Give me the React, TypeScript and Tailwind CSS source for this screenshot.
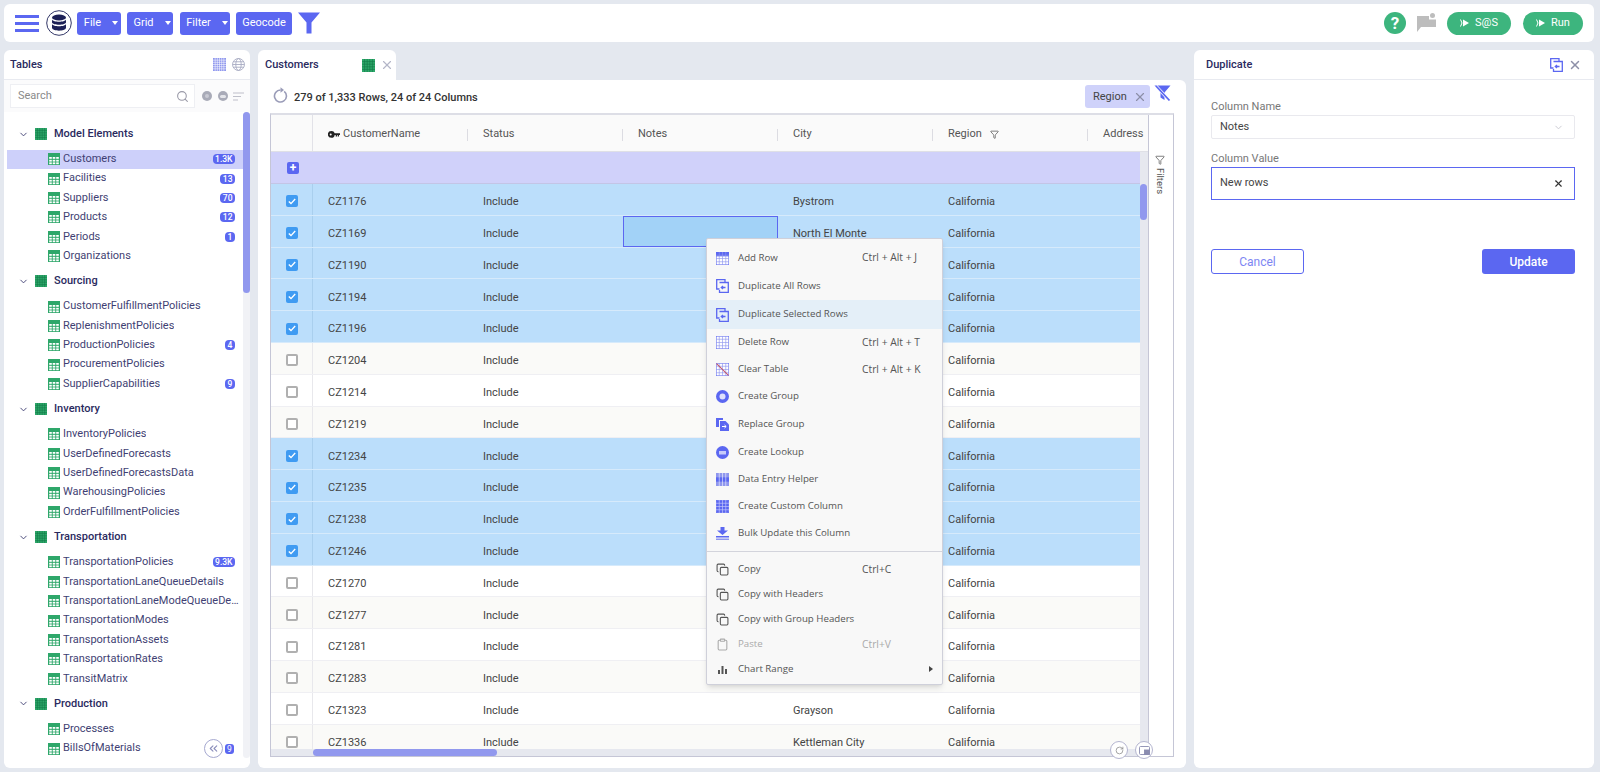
import { ChevronDown, ChevronsLeft, Copy, Clipboard, RotateCw, Search, X, Filter } from "lucide-react";

const tree = [
  { name: "Model Elements", items: [["Customers", "1.3K"], ["Facilities", "13"], ["Suppliers", "70"], ["Products", "12"], ["Periods", "1"], ["Organizations", ""]] },
  { name: "Sourcing", items: [["CustomerFulfillmentPolicies", ""], ["ReplenishmentPolicies", ""], ["ProductionPolicies", "4"], ["ProcurementPolicies", ""], ["SupplierCapabilities", "9"]] },
  { name: "Inventory", items: [["InventoryPolicies", ""], ["UserDefinedForecasts", ""], ["UserDefinedForecastsData", ""], ["WarehousingPolicies", ""], ["OrderFulfillmentPolicies", ""]] },
  { name: "Transportation", items: [["TransportationPolicies", "9.3K"], ["TransportationLaneQueueDetails", ""], ["TransportationLaneModeQueueDetails", ""], ["TransportationModes", ""], ["TransportationAssets", ""], ["TransportationRates", ""], ["TransitMatrix", ""]] },
  { name: "Production", items: [["Processes", ""], ["BillsOfMaterials", ""]] },
];

const rows = [
  ["CZ1176", "Bystrom", true], ["CZ1169", "North El Monte", true], ["CZ1190", "", true], ["CZ1194", "", true], ["CZ1196", "", true],
  ["CZ1204", "", false], ["CZ1214", "", false], ["CZ1219", "", false], ["CZ1234", "", true], ["CZ1235", "", true], ["CZ1238", "", true], ["CZ1246", "", true],
  ["CZ1270", "", false], ["CZ1277", "", false], ["CZ1281", "", false], ["CZ1283", "", false], ["CZ1323", "Grayson", false], ["CZ1336", "Kettleman City", false],
] as [string, string, boolean][];

const GREEN = "#2ea76a";
const BLUE = "#5b67f1";

function ItemGrid() {
  return (
    <svg width="12" height="12" viewBox="0 0 12 12" className="shrink-0">
      <rect width="12" height="12" fill={GREEN} />
      {[1.2, 4.7, 8.2].map((x) => [4, 6.8, 9.4].map((y) => <rect key={`${x}-${y}`} x={x} y={y} width="2.6" height="1.8" fill="#fff" />))}
    </svg>
  );
}

function GroupGrid({ size = 12 }: { size?: number }) {
  return (
    <svg width={size} height={size} viewBox="0 0 12 12" className="shrink-0">
      <rect width="12" height="12" fill={GREEN} />
      {[2.4, 4.8, 7.2, 9.6].map((v) => <path key={v} d={`M${v} 0V12M0 ${v}H12`} stroke="#137a47" strokeWidth="0.6" />)}
    </svg>
  );
}

function TableIcon({ head = false, all = false, slash = false }: { head?: boolean; all?: boolean; slash?: boolean }) {
  return (
    <svg width="13" height="13" viewBox="0 0 12 12" className="shrink-0">
      <rect x="0.25" y="0.25" width="11.5" height="11.5" fill={all ? BLUE : "#fff"} stroke={BLUE} strokeWidth="0.5" />
      {head && <rect width="12" height="4" fill={BLUE} />}
      {[3, 6, 9].map((v) => <path key={v} d={`M${v} 0V12M0 ${v}H12`} stroke={all ? "#c7cbfa" : "#8f97ee"} strokeWidth="0.6" />)}
      {slash && <path d="M0.5 0.5L11.5 11.5" stroke="#c2556a" strokeWidth="1" />}
    </svg>
  );
}

function DuplicateIcon({ size = 13 }: { size?: number }) {
  return (
    <svg width={size} height={size + 1} viewBox="0 0 13 14" fill="none" stroke={BLUE} strokeWidth="1.3" className="shrink-0">
      <path d="M3.5 10H0.7V0.7H9V3" />
      <path d="M3.5 3.5H12.3V13.3H3.5V11" />
      <path d="M9.5 8.5H5.5M7 7L5.3 8.5L7 10" />
    </svg>
  );
}

function KeyIcon() {
  return (
    <svg width="12" height="7" viewBox="0 0 12 7" fill="#222" className="shrink-0 mr-[3px]">
      <path fillRule="evenodd" d="M3.300 0A3.300 3.300 0 1 1 3.300 6.800A3.300 3.300 0 0 1 3.300 0ZM2.700 2.500A1 1 0 1 0 2.700 4.500A1 1 0 0 0 2.700 2.500Z" />
      <path d="M5.500 2.300H12V4H11V5.600H9.700V4H9V5.600H7.700V4H5.500Z" />
    </svg>
  );
}

function RefreshIcon() {
  return (
    <svg width="15" height="16" viewBox="0 0 15 16" fill="none" className="shrink-0 mr-[6px] mt-[-3px]">
      <path d="M11.200 4.300A6 6 0 1 1 7.500 3" stroke="#9a9cb8" strokeWidth="1.600" />
      <path d="M7.500 0.300V5.700L11 3Z" fill="#9a9cb8" />
    </svg>
  );
}

function Badge({ text }: { text: string }) {
  return <span className="ml-auto mr-[8px] h-[10px] min-w-[10px] px-[2.500px] rounded-[4px] bg-[#5b67f1] text-white text-[8.500px] leading-[10px] font-medium text-center">{text}</span>;
}

function Tree() {
  return (
    <div className="flex-1 min-w-0 ml-[3px] pt-[6.500px] text-[#3f3f73] text-[11px]">
      {tree.map((g) => (
        <div key={g.name}>
          <div className="h-[31px] flex items-center pl-[11px] font-medium text-[#2a2a5e]">
            <ChevronDown size={11} className="text-[#3f3f73] mr-[6px]" strokeWidth={2} />
            <GroupGrid />
            <span className="ml-[7px]">{g.name}</span>
          </div>
          {g.items.map(([name, badge]) => (
            <div key={name} className={`h-[19.4px] flex items-center pl-[41px] ${name === "Customers" ? "bg-[#cdd0fa]" : ""}`}>
              <ItemGrid />
              <span className="ml-[3px] truncate max-w-[178px]">{name}</span>
              {badge && <Badge text={badge} />}
            </div>
          ))}
        </div>
      ))}
    </div>
  );
}

function LeftPanel() {
  return (
    <aside className="relative w-[246px] mr-[8px] bg-white rounded-md flex flex-col overflow-hidden">
      <div className="h-[30px] shrink-0 flex items-center pl-[6px] pr-[5px] border-b border-[#e8eaf0] text-[11px] font-medium text-[#2a2a5e]">
        <span className="mt-[1px]">Tables</span>
        <svg width="13" height="13" viewBox="0 0 12 12" className="ml-auto"><rect width="12" height="12" fill="#8f97ee" />{[2, 4, 6, 8, 10].map((v) => <path key={v} d={`M${v} 0V12M0 ${v}H12`} stroke="#fff" strokeWidth="0.5" />)}</svg>
        <svg width="13" height="13" viewBox="0 0 12 12" fill="none" stroke="#a5a8c0" strokeWidth="0.8" className="ml-[6px]"><circle cx="6" cy="6" r="5.5" /><ellipse cx="6" cy="6" rx="2.500" ry="5.500" /><path d="M0.5 6H11.5M1.2 3.5H10.8M1.2 8.5H10.8" /></svg>
      </div>
      <div className="h-[32px] shrink-0 flex items-center pl-[6px] pr-[6px] bg-[#fbfbfc]">
        <div className="w-[185px] h-[24px] bg-white border border-[#eeeff3] flex items-center pl-[7px] pr-[5px] text-[11px] text-[#8a8a8a]">
          <span>Search</span>
          <Search size={13} className="ml-auto text-[#9a9aa8]" />
        </div>
        <span className="ml-[7px] w-[10px] h-[10px] rounded-full bg-[#a9abb8] flex items-center justify-center"><span className="w-[4px] h-[4px] rounded-full bg-[#c9cad4]" /></span>
        <span className="ml-[6px] w-[10px] h-[10px] rounded-full bg-[#a9abb8] flex items-center justify-center"><span className="w-[6px] h-[3px] rounded-full bg-[#e4e5ea]" /></span>
        <svg width="11" height="9" viewBox="0 0 11 9" stroke="#bfc0ca" strokeWidth="1.2" className="ml-[5px]"><path d="M0 1H11M0 4.5H8M0 8H5" /></svg>
      </div>
      <div className="flex-1 flex min-h-0">
        <Tree />
        <div className="w-[7px] h-[646px] ml-[0px] bg-[#f1f2f6] rounded-full shrink-0">
          <div className="h-[181px] bg-[#9198ee] rounded-full" />
        </div>
      </div>
      <span className="absolute left-[200px] top-[689px] w-[19px] h-[19px] rounded-full bg-white border border-[#a5a8d0] flex items-center justify-center text-[#8a8dbb]">
        <ChevronsLeft size={13} strokeWidth={2} />
      </span>
      <span className="absolute left-[221px] top-[694px] w-[9px] h-[10px] rounded-[3px] bg-[#5b67f1] text-white text-[8.500px] leading-[10px] text-center">9</span>
    </aside>
  );
}

const columns = ["CustomerName", "Status", "Notes", "City", "Region"];

function DataTable() {
  return (
    <div className="relative mx-[12px] flex border border-[#c5c6d6] border-t-2 border-t-[#dddee6] h-[644px] text-[11px] text-[#444]">
      <div className="w-[877px] shrink-0 flex flex-col overflow-hidden">
        <div className="h-[37px] shrink-0 flex bg-[#fafafa] border-b border-[#dfe0e6] text-[#555]">
          <div className="w-[42px] shrink-0 border-r border-[#e2e2e8]" />
          {columns.map((c, i) => (
            <div key={c} className="w-[155px] shrink-0 flex items-center pl-[15px] pt-[3px] relative">
              {i === 0 && <KeyIcon />}
              <span>{c}</span>
              {c === "Region" && <Filter size={9} className="ml-[8px] text-[#555]" />}
              <span className="ml-auto w-px h-[12px] bg-[#dcdce2]" />
            </div>
          ))}
          <div className="pl-[15px] pt-[3px] flex items-center">Address</div>
        </div>
        <div className="flex-1 min-h-0 flex">
          <div className="w-[869px] shrink-0 overflow-hidden">
            <div className="h-[32px] bg-[#d0d1fa] border-b border-[#c3c5e6] flex items-center pl-[16px]">
              <span className="w-[12px] h-[12px] rounded-[2px] bg-[#5b67f1] text-white flex items-center justify-center text-[12px] leading-none font-bold">+</span>
            </div>
            {rows.map(([id, city, sel], idx) => (
              <div key={id} className={`h-[31.8px] flex border-b ${sel ? "bg-[#bbdefb] border-[#d6eafb]" : idx % 2 ? "bg-[#fafaf8] border-[#efeff3]" : "bg-white border-[#efeff3]"}`}>
                <div className={`w-[42px] shrink-0 flex items-center justify-center pt-[4px] border-r ${sel ? "border-[#a9cfee]" : "border-[#e8e8ec]"}`}>
                  {sel ? (
                    <span className="w-[12px] h-[12px] rounded-[2px] bg-[#3f9bf2] flex items-center justify-center">
                      <svg width="8" height="7" viewBox="0 0 8 7" fill="none" stroke="#fff" strokeWidth="1.4"><path d="M0.8 3.5L3 5.6L7.2 1" /></svg>
                    </span>
                  ) : (
                    <span className="w-[12px] h-[12px] rounded-[2px] bg-white border-2 border-[#b0b0b0]" />
                  )}
                </div>
                <div className="w-[155px] shrink-0 pl-[15px] pt-[6px] flex items-center">{id}</div>
                <div className="w-[155px] shrink-0 pl-[15px] pt-[6px] flex items-center">Include</div>
                <div className={`w-[155px] shrink-0 ${id === "CZ1169" ? "bg-[#a2d2f7] border border-[#5b67f1]" : ""}`} />
                <div className="w-[155px] shrink-0 pl-[15px] pt-[6px] flex items-center">{city}</div>
                <div className="w-[155px] shrink-0 pl-[15px] pt-[6px] flex items-center">California</div>
              </div>
            ))}
          </div>
          <div className="w-[8px] bg-[#e6e8ef] shrink-0">
            <div className="h-[36px] mt-[32px] w-[7px] bg-[#9198ee] rounded-full" />
          </div>
        </div>
        <div className="h-[7px] shrink-0 bg-[#e6e8ef] pl-[42px]">
          <div className="w-[184px] h-[7px] bg-[#9198ee] rounded-full" />
        </div>
      </div>
      <div className="flex-1 border-l border-[#c5c6d6] flex flex-col items-center pt-[40px] pr-[3px] text-[9.500px] text-[#555]">
        <Filter size={10} className="text-[#666] mb-[3px]" />
        <span className="[writing-mode:vertical-rl]">Filters</span>
      </div>
      <span className="absolute left-[839px] top-[626px] w-[18px] h-[18px] rounded-full bg-white border border-[#b4b5d0] flex items-center justify-center">
        <RotateCw size={9} className="text-[#888]" />
      </span>
      <span className="absolute left-[864px] top-[626px] w-[18px] h-[18px] rounded-full bg-white border border-[#b4b5d0] flex items-center justify-center">
        <svg width="11" height="9" viewBox="0 0 11 9" fill="none" stroke="#8a8cb0" strokeWidth="0.9"><rect x="0.5" y="0.5" width="10" height="8" rx="1" /><rect x="5.5" y="4" width="5" height="4.5" fill="#8a8cb0" /></svg>
      </span>
    </div>
  );
}

function MenuRow({ y, icon, label, hint, light, active }: { y: number; icon: React.ReactNode; label: string; hint?: string; light?: boolean; active?: boolean }) {
  return (
    <div className={`flex items-center pl-[9px] ${active ? "bg-[#e4eff8]" : ""} ${light ? "text-[#aaa]" : "text-[#555]"}`} style={{ height: y }}>
      <span className="w-[13px] flex justify-center shrink-0">{icon}</span>
      <span className="ml-[9px] text-[9.700px]">{label}</span>
      {hint && <span className="absolute left-[155px] text-[10.300px]">{hint}</span>}
    </div>
  );
}

function ContextMenu() {
  const copy = <Copy size={13} className="text-[#555]" />;
  return (
    <div className="absolute left-[706px] top-[238px] w-[237px] h-[447px] pt-[5px] bg-[#f8f8f8] border border-[#cfd0da] rounded-[2px] shadow-md font-['Open_Sans',sans-serif]">
      <MenuRow y={28} icon={<TableIcon head />} label="Add Row" hint="Ctrl + Alt + J" />
      <MenuRow y={28} icon={<DuplicateIcon />} label="Duplicate All Rows" />
      <MenuRow y={29} icon={<DuplicateIcon />} label="Duplicate Selected Rows" active />
      <MenuRow y={27} icon={<TableIcon />} label="Delete Row" hint="Ctrl + Alt + T" />
      <MenuRow y={27} icon={<TableIcon slash />} label="Clear Table" hint="Ctrl + Alt + K" />
      <MenuRow y={27} icon={<svg width="13" height="13" viewBox="0 0 13 13"><circle cx="6.5" cy="6.5" r="6.5" fill={BLUE} /><circle cx="6.5" cy="6.5" r="3" fill="#dfe1fc" /></svg>} label="Create Group" />
      <MenuRow y={28} icon={<svg width="13" height="13" viewBox="0 0 13 13" fill={BLUE}><path d="M0 0H7V2H3V9H0Z" /><path d="M4 3H9.5L13 6.5V13H4Z" /><path d="M6 8.5H10M8.5 7L10.2 8.5L8.5 10" stroke="#fff" fill="none" /></svg>} label="Replace Group" />
      <MenuRow y={28} icon={<svg width="13" height="13" viewBox="0 0 13 13"><circle cx="6.5" cy="6.5" r="6.5" fill={BLUE} /><rect x="3" y="5" width="7" height="3.5" fill="#c7cbfa" /></svg>} label="Create Lookup" />
      <MenuRow y={27} icon={<svg width="13" height="13" viewBox="0 0 12 12"><rect width="12" height="12" fill="#8f97ee" /><rect y="4" width="12" height="4" fill={BLUE} /><path d="M3 0V12M6 0V12M9 0V12" stroke="#fff" strokeWidth="0.5" /></svg>} label="Data Entry Helper" />
      <MenuRow y={27} icon={<TableIcon all />} label="Create Custom Column" />
      <MenuRow y={27} icon={<svg width="13" height="13" viewBox="0 0 13 13" fill={BLUE}><path d="M4.5 0H8.5V3.5H12L6.5 8L1 3.5H4.5Z" /><rect y="9" width="13" height="1.5" /><rect y="11.5" width="13" height="1.5" fill="#8f97ee" /></svg>} label="Bulk Update this Column" />
      <div className="h-[6px] mt-[4px] border-t border-[#d3d4dc]" />
      <MenuRow y={25} icon={copy} label="Copy" hint="Ctrl+C" />
      <MenuRow y={25} icon={copy} label="Copy with Headers" />
      <MenuRow y={25} icon={copy} label="Copy with Group Headers" />
      <MenuRow y={25} icon={<Clipboard size={13} className="text-[#aaa]" />} label="Paste" hint="Ctrl+V" light />
      <MenuRow y={25} icon={<svg width="9" height="8" viewBox="0 0 9 8" fill="#555"><rect y="4" width="2" height="4" /><rect x="3.5" width="2" height="8" /><rect x="7" y="3" width="2" height="5" /></svg>} label="Chart Range" />
      <span className="absolute left-[222px] top-[427px] w-0 h-0 border-y-[3.5px] border-y-transparent border-l-[4px] border-l-[#444]" />
    </div>
  );
}

function CenterPanel() {
  return (
    <section className="w-[928px] mr-[8px] flex flex-col">
      <div className="w-[138px] h-[30px] shrink-0 bg-white rounded-t-md flex items-center pl-[7px] text-[11px] font-medium text-[#2a2a5e]">
        <span>Customers</span>
        <span className="ml-auto"><GroupGrid size={13} /></span>
        <X size={14} className="ml-[5px] mr-[2px] text-[#b4b6c8]" />
      </div>
      <div className="flex-1 bg-white rounded-b-md rounded-tr-md">
        <div className="h-[33px] mx-[12px] pl-[3px] flex items-center text-[11px] text-[#333]">
          <RefreshIcon />
          <span className="mt-[3px] font-medium">279 of 1,333 Rows, 24 of 24 Columns</span>
          <span className="ml-auto w-[65px] h-[23px] rounded-[3px] bg-[#cfd2fa] flex items-center pl-[8px] pt-[1px] text-[#444]">
            Region
            <X size={14} className="ml-[6px] text-[#8c8ea8]" />
          </span>
          <svg width="17" height="17" viewBox="0 0 17 17" className="ml-[4px] mr-[3px] -mt-[7px]">
            <path d="M0.500 0.500H16.500L10.500 7.500V15L6.500 12.500V7.500Z" fill={BLUE} />
            <path d="M2 1L15 15" stroke="#fff" strokeWidth="3" />
            <path d="M2 1L15.500 15.500" stroke={BLUE} strokeWidth="1.800" />
          </svg>
        </div>
        <DataTable />
      </div>
    </section>
  );
}

function RightPanel() {
  return (
    <aside className="w-[400px] bg-white rounded-md flex flex-col">
      <div className="h-[30px] flex items-center pl-[12px] pr-[12px] border-b border-[#e8eaf0] text-[11px] font-medium text-[#2a2a5e]">
        <span className="mt-[1px]">Duplicate</span>
        <span className="ml-auto mr-[1px]"><DuplicateIcon /></span>
        <X size={14} strokeWidth={2.5} className="ml-[4px] text-[#8d90a8]" />
      </div>
      <div className="pl-[17px] pr-[19px] pt-[20px] text-[11px] text-[#777]">
        <label className="block leading-[14px] mb-[1px]">Column Name</label>
        <div className="h-[24px] border border-[#e9e9ee] rounded-[2px] flex items-center pl-[8px] pr-[10px] text-[#444]">
          Notes
          <ChevronDown size={11} className="ml-auto text-[#c8c8d0]" />
        </div>
        <label className="block leading-[14px] mt-[13px] mb-[1px]">Column Value</label>
        <div className="h-[33px] border border-[#5b67f1] flex items-center pl-[8px] pr-[10px] text-[#444]">
          New rows
          <X size={11} strokeWidth={2.5} className="ml-auto text-[#333]" />
        </div>
        <div className="mt-[49px] flex justify-between">
          <button className="w-[93px] h-[25px] rounded-[3px] border border-[#5b67f1] text-[#7d86f3] text-[12px]">Cancel</button>
          <button className="w-[93px] h-[25px] rounded-[3px] bg-[#5b67f1] text-white text-[12px] font-medium">Update</button>
        </div>
      </div>
    </aside>
  );
}

function TopButton({ label, caret, w }: { label: string; caret?: boolean; w: string }) {
  return (
    <div className={`${w} h-[23px] rounded-[3px] bg-[#5b67f1] text-white text-[11px] flex items-center justify-center ${caret ? "gap-[11px] pl-[4px]" : ""}`}>
      <span>{label}</span>
      {caret && <span className="w-0 h-0 border-x-[3px] border-x-transparent border-t-[4px] border-t-white" />}
    </div>
  );
}

function RunButton({ label, w }: { label: string; w: string }) {
  return (
    <div className={`${w} h-[23px] rounded-full bg-[#3db57e] text-white text-[11px] flex items-center justify-center gap-[6px]`}>
      <svg width="9" height="8" viewBox="0 0 9 8" fill="#fff"><path d="M3 0.5L9 4L3 7.5Z" /><path d="M0.5 0.5L2 4L0.5 7.5" fill="none" stroke="#fff" /></svg>
      <span>{label}</span>
    </div>
  );
}

function TopBar() {
  return (
    <header className="h-[38px] shrink-0 mb-[8px] bg-white rounded-md flex items-center pl-[11px] pr-[11px]">
      <div className="w-[24px] flex flex-col gap-[4px]">
        <span className="h-[3px] bg-[#5b67f1]" />
        <span className="h-[3px] bg-[#5b67f1]" />
        <span className="h-[3px] bg-[#5b67f1]" />
      </div>
      <svg width="26" height="26" viewBox="0 0 26 26" className="ml-[7px]">
        <circle cx="13" cy="13" r="12.3" fill="#fff" stroke="#1c2056" strokeWidth="0.9" />
        <ellipse cx="13" cy="7.5" rx="7" ry="3" fill="#1c2056" />
        <path d="M6 9.5C7 12.5 19 12.5 20 9.5V12.5C19 15.5 7 15.5 6 12.5Z" fill="#1c2056" />
        <path d="M6 14C7 17 19 17 20 14V18C19 21.500 7 21.500 6 18Z" fill="#1c2056" />
      </svg>
      <div className="ml-[5px]"><TopButton label="File" caret w="w-[44px]" /></div>
      <div className="ml-[6px]"><TopButton label="Grid" caret w="w-[46px]" /></div>
      <div className="ml-[7px]"><TopButton label="Filter" caret w="w-[50px]" /></div>
      <div className="ml-[6px]"><TopButton label="Geocode" w="w-[56px]" /></div>
      <svg width="22" height="22" viewBox="0 0 22 22" fill="#5b67f1" className="ml-[6px]"><path d="M0 0.500H22L13.500 10.500V21.500H8.500V10.500Z" /></svg>
      <div className="ml-auto w-[22px] h-[22px] rounded-full bg-[#3db57e] text-white text-[17px] leading-[22px] text-center font-bold">?</div>
      <svg width="19" height="20" viewBox="0 0 19 20" fill="#bdbdbd" className="ml-[11px]"><path d="M0 3H12V6.500H19V14H4L0 19Z" /><circle cx="15.500" cy="2.500" r="2.500" /></svg>
      <div className="ml-[11px]"><RunButton label="S@S" w="w-[64px]" /></div>
      <div className="ml-[12px]"><RunButton label="Run" w="w-[60px]" /></div>
    </header>
  );
}

export default function App() {
  return (
    <div className="relative w-[1600px] h-[772px] overflow-hidden bg-[#e4e8ef] pt-[4px] pl-[4px] font-['Roboto',sans-serif]">
      <div className="w-[1590px] flex flex-col h-[764px]">
        <TopBar />
        <main className="flex-1 min-h-0 flex">
          <LeftPanel />
          <CenterPanel />
          <RightPanel />
        </main>
      </div>
      <ContextMenu />
    </div>
  );
}
